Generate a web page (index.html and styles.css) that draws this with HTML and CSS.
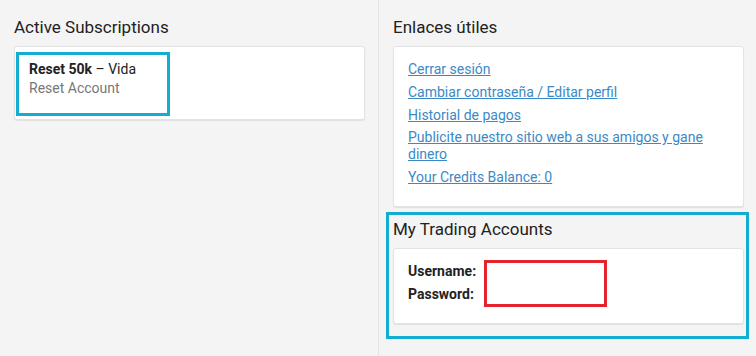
FILE: index.html
```html
<!DOCTYPE html>
<html lang="es">
<head>
  <meta charset="UTF-8" />
  <title>Mi cuenta</title>
  <link rel="stylesheet" href="styles.css">
</head>
<body>

<div class="page">
  <div class="col col-left">
    <h2>Active Subscriptions</h2>
    <div class="card card-subs">
      <div class="sub-item marcado">
        <p class="sub-name"><strong>Reset 50k</strong> – Vida</p>
        <p class="sub-type">Reset Account</p>
      </div>
    </div>
  </div>

  <div class="col col-right">
    <h2>Enlaces útiles</h2>
    <div class="card card-links">
      <ul>
        <li><a href="#">Cerrar sesión</a></li>
        <li><a href="#">Cambiar contraseña / Editar perfil</a></li>
        <li><a href="#">Historial de pagos</a></li>
        <li><a href="#">Publicite nuestro sitio web a sus amigos y gane dinero</a></li>
        <li><a href="#">Your Credits Balance: 0</a></li>
      </ul>
    </div>

    <div class="trading marcado">
      <h2>My Trading Accounts</h2>
      <div class="card card-trading">
        <div class="labels">
          <p>Username:</p>
          <p>Password:</p>
        </div>
        <div class="oculto"></div>
      </div>
    </div>
  </div>
</div>

</body>
</html>
```

FILE: styles.css
```css
body {
  margin: 0;
  font-family: Roboto, "Liberation Sans", sans-serif;
  background-color: #f4f4f4;
  color: #222;
  font-size: 14px;
}
.page {
  display: grid;
  grid-template-columns: 379px 1fr;
  min-height: 356px;
}
.col-left {
  border-right: 1px solid #e3e3e3;
  padding: 0 13px 0 14px;
}
.col-right {
  padding: 0 12px 0 14px;
}
h2 {
  font-size: 17px;
  font-weight: normal;
  line-height: 22px;
  margin: 16px 0 8px;
  color: #222;
}
.card {
  background: #fff;
  border: 1px solid #e3e3e3;
  border-radius: 3px;
  box-shadow: 0 1px 1px rgba(0,0,0,0.08);
}
.marcado {
  border: 3px solid #14add2;
}
.card-subs {
  padding: 5px 1px 3px;
}
.sub-item {
  width: 128px;
  padding: 5px 10px 15px;
  line-height: 19px;
}
.sub-item p {
  margin: 0;
}
.sub-type {
  color: #777;
}
.card-links ul {
  list-style: none;
  margin: 0;
  padding: 14px 14px 20px;
}
.card-links li {
  line-height: 1.2;
  margin-bottom: 6px;
}
.card-links li:last-child {
  margin-bottom: 0;
}
.card-links a {
  color: #3b89c6;
}
.trading {
  margin: 5px -5px 0 -7px;
  padding: 0 2px 12px 4px;
}
.trading h2 {
  margin: 3px 0 8px;
}
.card-trading {
  display: flex;
  align-items: flex-start;
  gap: 8px;
  padding: 11px 14px 15px;
}
.labels {
  margin-top: 3px;
  font-weight: bold;
}
.labels p {
  margin: 0 0 6px;
  line-height: 1.2;
}
.oculto {
  width: 123px;
  height: 47px;
  box-sizing: border-box;
  border: 3px solid #e5232b;
}
```
